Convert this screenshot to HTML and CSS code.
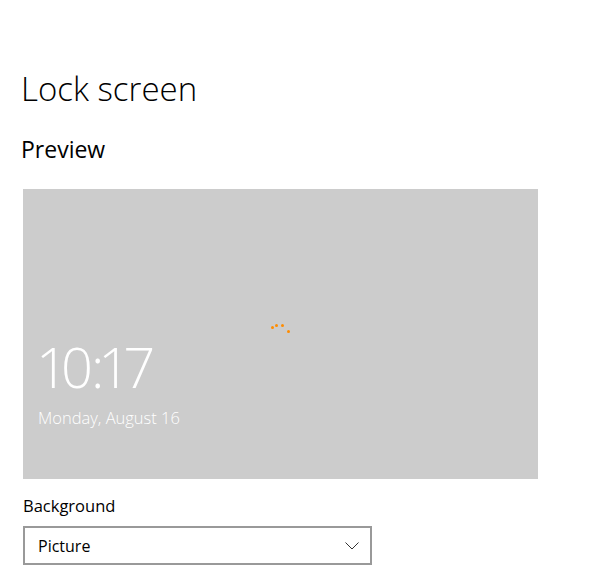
FILE: index.html
```html
<!DOCTYPE html>
<html lang="en">
<head>
    <meta charset="utf-8">
    <title>Lock screen</title>
    <link rel="stylesheet" href="styles.css">
</head>
<body>
    <main class="side">
        <h1 class="titel">Lock screen</h1>
        <h2 class="undertitel">Preview</h2>

        <section class="preview">
            <div class="spinner">
                <span class="prik p1"></span>
                <span class="prik p2"></span>
                <span class="prik p3"></span>
                <span class="prik p4"></span>
            </div>
            <div class="ur">10<span class="kolon">:</span>17</div>
            <div class="dato">Monday, August 16</div>
        </section>

        <label class="felt-navn">Background</label>
        <div class="dropdown">
            <span>Picture</span>
            <svg class="pil" width="14" height="8" viewBox="0 0 14 8">
                <path d="M0.5 0.5 L7 7 L13.5 0.5" fill="none" stroke="#333" stroke-width="1"/>
            </svg>
        </div>
    </main>
</body>
</html>
```

FILE: styles.css
```css
* {
    box-sizing: border-box;
}

body {
    margin: 0;
    background-color: #ffffff;
    font-family: 'Open Sans', 'Noto Sans', sans-serif;
    color: #000000;
}

.side {
    padding: 66px 0 0 21px;
}

.titel {
    font-weight: 300;
    font-size: 33px;
    margin: 0;
    line-height: 46px;
}

.undertitel {
    font-weight: 400;
    font-size: 23px;
    margin: 22px 0 0 0;
    line-height: 30px;
}

.preview {
    position: relative;
    width: 515px;
    height: 290px;
    margin: 25px 0 0 2px;
    background-color: #cccccc;
    color: #ffffff;
    padding: 149px 0 0 13px;
}

.spinner {
    position: absolute;
    left: 248px;
    top: 132px;
    width: 24px;
    height: 12px;
}

.prik {
    position: absolute;
    width: 3px;
    height: 3px;
    border-radius: 50%;
    background-color: #ff8c00;
}

.p1 { left: 0; top: 5px; }
.p2 { left: 4px; top: 3px; }
.p3 { left: 10px; top: 3px; }
.p4 { left: 16px; top: 9px; }

.ur {
    font-weight: 300;
    font-size: 56px;
    line-height: 56px;
    letter-spacing: -7px;
}

.kolon {
    margin: 0 1px 0 5px;
}

.dato {
    font-weight: 300;
    font-size: 16.5px;
    line-height: 22px;
    margin-top: 13px;
    padding-left: 2px;
}

.felt-navn {
    display: block;
    font-size: 16.5px;
    margin: 15px 0 0 2px;
    line-height: 24px;
}

.dropdown {
    display: flex;
    align-items: center;
    justify-content: space-between;
    width: 349px;
    height: 39px;
    margin: 8px 0 0 2px;
    border: 2px solid #999999;
    padding: 0 11px 0 13px;
    font-size: 16px;
}
```
